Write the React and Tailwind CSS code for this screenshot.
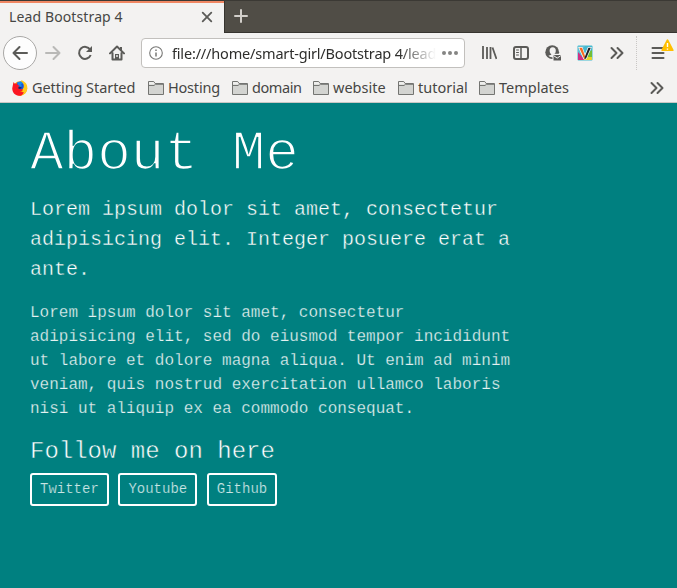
import React from 'react';

const ink = '#5b5b58';

function Stroke({ w = 16, h = 16, children, color = ink, className = '' }) {
  return (
    <svg width={w} height={h} viewBox={`0 0 ${w} ${h}`} fill="none" stroke={color} strokeWidth="2" strokeLinecap="round" strokeLinejoin="round" className={`shrink-0 ${className}`}>
      {children}
    </svg>
  );
}

function Folder() {
  return (
    <svg width="16" height="14" viewBox="0 0 16 14" className="shrink-0">
      <path d="M.5 13.5V.5h5.2l1.4 2h8.4v11z" fill="#d3d4d1" stroke="#747572" />
      <path d="M1 4.5h5l1.3-1.2H15" fill="none" stroke="#747572" />
      <path d="M1 3.6V1h4.4l1.4 2-1 .6z" fill="#efefed" />
    </svg>
  );
}

function Firefox() {
  return (
    <svg width="16" height="16" viewBox="0 0 16 16" className="shrink-0">
      <circle cx="8" cy="8.5" r="7.2" fill="#ff9a00" />
      <path d="M9 .3c5 1.3 7 5 6.1 9.5C14 13.5 11 16 7.5 15.8l3.5-5z" fill="#ffc91c" />
      <circle cx="8" cy="6" r="3.8" fill="#1554db" />
      <path d="M5 2.2l4-1 2 2-2 1 1 2-3 1z" fill="#1289ee" />
      <path d="M1.5 2l1.3 1.7 2.5-.3.4 1.5 2 .8-1.4 1.5 1 2 3.5.1c-.7 2.5-3 2.5-3 2.5l4 .4c-1 3-3 3.8-5 3.6C3 15.5 0 12.3.3 8z" fill="#fb1723" />
      <path d="M7 6.5l3 1.3-2.4 1.1-1.5-.7z" fill="#28205b" />
    </svg>
  );
}

function Chevrons() {
  return <Stroke w={14} h={14}><path d="M1.5 2l5 5-5 5M7.5 2l5 5-5 5" /></Stroke>;
}

const bookmarks = [
  { label: 'Hosting', box: 'w-[84px]', text: 'tracking-[-0.2px]' },
  { label: 'domain', box: 'w-[81px]', text: 'tracking-[-0.42px]' },
  { label: 'website', box: 'w-[85px]', text: 'tracking-[0px]' },
  { label: 'tutorial', box: 'w-[81px]', text: 'tracking-[0px]' },
  { label: 'Templates', box: 'w-[110px]', text: 'tracking-[0px]' },
];

export default function App() {
  return (
    <div className="h-[588px] w-[677px] overflow-hidden bg-[#008080]">
      <div className="h-[103px] border-b border-[#c9c7c4] bg-[#f3f2f1] font-['Noto_Sans',sans-serif] text-[14.5px] text-[#464644]">
        <div className="flex h-[33px] border-t border-[#3b3934] bg-[#504d46]">
          <div className="flex w-[224px] shrink-0 items-center justify-between border-t-2 border-[#f08763] bg-[#f3f2f1] pb-[3px] pl-[9px] pr-[11px]">
            <span className="whitespace-nowrap text-[14px] leading-5 tracking-[0.12px]">Lead Bootstrap 4</span>
            <Stroke w={12} h={12}><path d="M1.7 1.7l8.6 8.6M10.3 1.7l-8.6 8.6" strokeWidth="1.8" /></Stroke>
          </div>
          <div className="flex flex-1 border-b border-l border-[#36342f] pl-[9px] pt-[8px]">
            <Stroke w={14} h={14} color="#d2cfca"><path d="M7 1v12M1 7h12" /></Stroke>
          </div>
        </div>

        <div className="flex h-10 items-center pl-[3px]">
          <div className="flex h-[34px] w-[34px] items-center justify-center rounded-full border border-[#a9a8a6] bg-[#fdfdfd]">
            <Stroke><path d="M15 8H1.5M7.5 2l-6 6 6 6" /></Stroke>
          </div>
          <Stroke color="#b9b9b7" className="ml-2"><path d="M1 8h13.5M8.5 2l6 6-6 6" /></Stroke>
          <Stroke className="ml-4"><path d="M13.2 4.7A6 6 0 1 0 13.7 10" strokeLinecap="butt" /><path d="M15 1v6H9z" fill={ink} stroke="none" /></Stroke>
          <Stroke className="ml-4">
            <path d="M1 8.4L8 1.5l7 6.9M3.5 8v6.5h9V8" />
            <path d="M6 9h4v5H6zM11 2h2v4h-2z" fill={ink} stroke="none" /><path d="M8 10v2" stroke="#f3f2f1" strokeWidth="1.4" strokeLinecap="butt" />
          </Stroke>
          <div className="ml-4 flex h-[30px] w-[324px] shrink-0 items-center rounded-[4px] border border-[#c2c0bd] bg-white pl-[7px] pr-[6px]">
            <Stroke w={14} h={14} color="#777775"><circle cx="7" cy="7" r="6.3" strokeWidth="1.1" /><path d="M7 6.4v4" strokeWidth="1.5" strokeLinecap="butt" /><path d="M7 3.5v1.5" strokeWidth="1.5" strokeLinecap="butt" /></Stroke>
            <span className="ml-[9px] w-[264px] shrink-0 whitespace-nowrap pt-px text-[14.5px] tracking-[-0.18px] text-[#2e2e2c] [mask-image:linear-gradient(to_right,black_86%,transparent_100%)]">file:///home/smart-girl/Bootstrap 4/lead</span>
            <svg width="18" height="6" viewBox="0 0 18 6" fill="#858583" className="ml-[5px] shrink-0"><circle cx="3" cy="3" r="2" /><circle cx="9" cy="3" r="2" /><circle cx="15" cy="3" r="2" /></svg>
          </div>
          <Stroke className="ml-4"><path d="M2 1v13M6 2v12M9.5 2v12M11.5 2.5l4 11.5" strokeLinecap="butt" strokeWidth="1.8" /></Stroke>
          <Stroke className="ml-4"><rect x="1" y="2" width="14" height="12" rx="2" /><path d="M8 2v12" strokeWidth="1.5" /><path d="M3.5 5h2M3.5 7.5h2M3.5 10h2" strokeWidth="1" /></Stroke>
          <svg width="16" height="16" viewBox="0 0 16 16" className="ml-4 shrink-0">
            <circle cx="7.2" cy="7.2" r="6.9" fill={ink} />
            <ellipse cx="7.7" cy="5.7" rx="3.1" ry="3.5" fill="#f3f2f1" />
            <path d="M6.2 8h3v2.2l2 .8-2.5 1.4c-2.3 0-4.2-.6-5.3-1.7l2.8-1z" fill="#f3f2f1" />
            <path d="M7.5 8.8H16V16H7.5z" fill="#f3f2f1" />
            <path d="M8.5 10H16v5.5H8.5z" fill={ink} />
            <path d="M8.6 10.6l3.6 2.5 3.7-2.5" fill="none" stroke="#f3f2f1" />
          </svg>
          <svg width="16" height="16" viewBox="0 0 16 16" className="ml-4 shrink-0">
            <rect x=".5" y=".5" width="15" height="15" rx="1" fill="#45b9d0" />
            <path d="M1 1h7l-5 7H1z" fill="#62bfd4" /><path d="M1 7l7 8H1z" fill="#d32f83" /><path d="M11 8l4-3v10H7z" fill="#73bf35" /><path d="M9 12h6v3H7z" fill="#e9d22b" />
            <path d="M1.2 2h4.2L8 9l3-7h3.8L9.5 14.3h-3z" fill="#fff" />
            <path d="M2.3 2.8h2.8l3 8.5-1 2.4z" fill="#f66b24" /><path d="M11.4 2.8h2.4L9 13.7H7.1z" fill="#202127" />
          </svg>
          <div className="ml-[17px] flex"><Chevrons /></div>
          <div className="ml-[12px] h-[34px] border-l border-dotted border-[#c9c7c5]" />
          <div className="relative ml-[14px] h-4 w-5 shrink-0">
            <Stroke w={14}><path d="M1.5 3h10M1.5 8h11M1.5 13h11" /></Stroke>
            <svg width="13" height="13" viewBox="0 0 13 13" className="absolute left-[10px] top-[-6px]"><path d="M6.5 1.2l5.2 10H1.3z" fill="#ffbf00" stroke="#ffbf00" strokeWidth="1.8" strokeLinejoin="round" /><path d="M6.5 4v4M6.5 9.4v1.3" stroke="#fff" strokeWidth="1.4" /></svg>
          </div>
        </div>

        <div className="flex h-[29px] items-center whitespace-nowrap pl-3">
          <div className="flex w-[136px] shrink-0 items-center gap-1"><Firefox /><span className="tracking-[-0.06px]">Getting Started</span></div>
          {bookmarks.map(({ label, box, text }) => (
            <div key={label} className={`flex shrink-0 items-center gap-[4px] ${box}`}><Folder /><span className={text}>{label}</span></div>
          ))}
          <div className="ml-[61px]"><Chevrons /></div>
        </div>
      </div>

      <main className="px-[30px] pt-[18px] font-['Liberation_Mono',monospace] text-white">
        <h1 className="mb-[7px] text-[56px] font-light leading-[67px] [-webkit-text-stroke:1.6px_#008080]">About Me</h1>
        <p className="mb-4 w-[485px] text-[20px] font-light leading-[30px] [-webkit-text-stroke:0.4px_#008080]">Lorem ipsum dolor sit amet, consectetur adipisicing elit. Integer posuere erat a ante.</p>
        <p className="mb-4 w-[485px] text-base leading-6 text-[#e4f2f2] [-webkit-text-stroke:0.25px_#008080]">Lorem ipsum dolor sit amet, consectetur adipisicing elit, sed do eiusmod tempor incididunt ut labore et dolore magna aliqua. Ut enim ad minim veniam, quis nostrud exercitation ullamco laboris nisi ut aliquip ex ea commodo consequat.</p>
        <h2 className="mb-[7px] text-2xl leading-[29px] [-webkit-text-stroke:0.5px_#008080]">Follow me on here</h2>
        <div className="flex gap-[9.6px]">
          {['Twitter', 'Youtube', 'Github'].map((name) => (
            <button key={name} className="rounded-[3px] border-2 border-white px-2 py-1 text-sm leading-[21px] text-[#c9e5e5] [-webkit-text-stroke:0.2px_#008080]">{name}</button>
          ))}
        </div>
      </main>
    </div>
  );
}
